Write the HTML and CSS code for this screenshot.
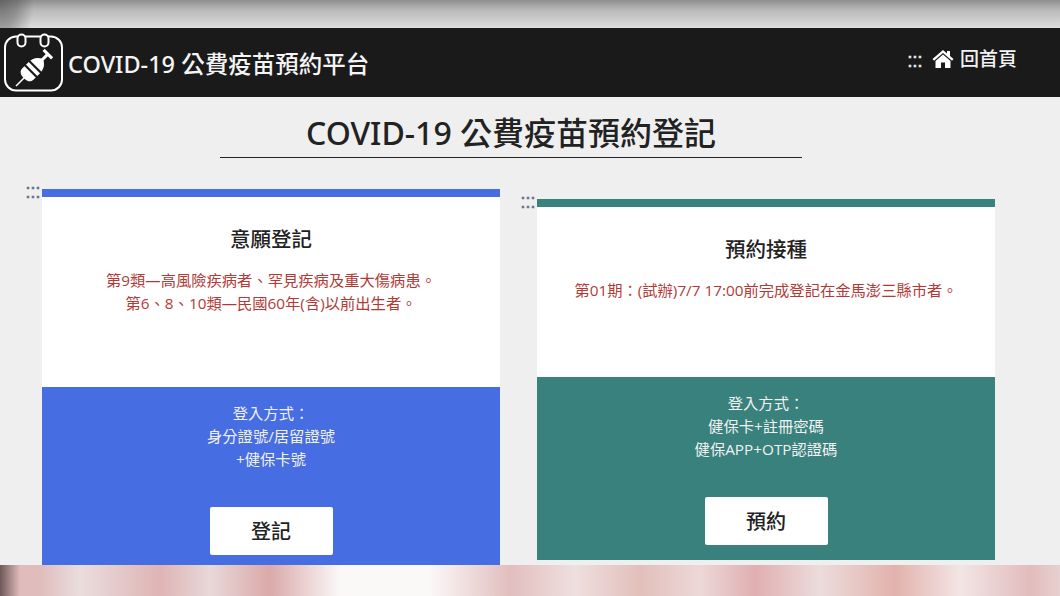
FILE: index.html
```html
<!DOCTYPE html>
<html lang="zh-Hant">
<head>
<meta charset="utf-8">
<title>COVID-19 公費疫苗預約平台</title>
<link rel="stylesheet" href="styles.css">
</head>
<body>
<div class="strip-top"></div>
<header class="topbar">
  <div class="brand">
    <svg class="logo" width="62" height="66" viewBox="0 0 62 66" fill="none">
      <rect x="3" y="8.500" width="57" height="54" rx="11" stroke="#fff" stroke-width="2"/>
      <rect x="15.500" y="6.500" width="8" height="12" rx="4" stroke="#fff" stroke-width="2" fill="#1a1a1a"/>
      <rect x="38.500" y="6.500" width="8" height="12" rx="4" stroke="#fff" stroke-width="2" fill="#1a1a1a"/>
      <g transform="rotate(45 31 41)">
        <path d="M31 52v13" stroke="#fff" stroke-width="1.600"/>
        <path d="M23 39c0-6 3-10 8-12 5 2 8 6 8 12v9c0 4-3 6-8 6s-8-2-8-6z" fill="#fff"/>
        <path d="M22 38h18M22 44h18" stroke="#1a1a1a" stroke-width="2.200"/>
        <path d="M31 29v-8M25 20h12" stroke="#fff" stroke-width="3"/>
      </g>
    </svg>
    <span class="brand-name">COVID-19 公費疫苗預約平台</span>
  </div>
  <nav class="nav">
    <span class="dots nav-dots">:::</span>
    <svg class="home" width="22" height="18" viewBox="0 0 22 18">
      <path d="M11 0 L0.500 9 L2 10.700 L11 3 L20 10.700 L21.500 9 L18 6 V1 H15 V3.400Z" fill="#fff"/>
      <path d="M11 4.500 L3.500 11 V18 H9 V12.500 H13 V18 H18.500 V11Z" fill="#fff"/>
    </svg>
    <a class="nav-link">回首頁</a>
  </nav>
</header>
<main class="main">
  <h1 class="page-title">COVID-19 公費疫苗預約登記</h1>
  <div class="cards">
    <section class="card card-blue">
      <span class="dots card-dots">:::</span>
      <div class="card-body">
        <h2 class="card-title">意願登記</h2>
        <p class="card-note">第9類—高風險疾病者、罕見疾病及重大傷病患。<br>第6、8、10類—民國60年(含)以前出生者。</p>
      </div>
      <div class="card-foot">
        <p class="login">登入方式：<br>身分證號/居留證號<br>+健保卡號</p>
        <a class="btn">登記</a>
      </div>
    </section>
    <section class="card card-green">
      <span class="dots card-dots">:::</span>
      <div class="card-body">
        <h2 class="card-title">預約接種</h2>
        <p class="card-note">第01期：(試辦)7/7 17:00前完成登記在金馬澎三縣市者。</p>
      </div>
      <div class="card-foot">
        <p class="login">登入方式：<br>健保卡+註冊密碼<br>健保APP+OTP認證碼</p>
        <a class="btn">預約</a>
      </div>
    </section>
  </div>
</main>
<div class="strip-bottom"></div>
</body>
</html>
```
FILE: styles.css
```css
* { box-sizing: border-box; }
html, body { margin: 0; padding: 0; }
body {
  width: 1060px;
  height: 596px;
  overflow: hidden;
  background: #efefef;
  font-family: "Open Sans", "Noto Sans CJK TC", sans-serif;
}
.strip-top {
  height: 28px;
  background:
    radial-gradient(ellipse 34px 60px at 0 0, rgba(70,70,70,.6) 0, rgba(70,70,70,.4) 50%, rgba(70,70,70,0) 100%),
    linear-gradient(180deg, #8e8e8e 0, #b9b9b9 10px, #dedede 28px);
}
.topbar {
  height: 69px;
  background: #1a1a1a;
  color: #fff;
  display: flex;
  justify-content: space-between;
  padding-left: 2px;
}
.brand { display: flex; align-items: flex-start; }
.logo { flex: none; }
.brand-name {
  font-family: "Noto Sans", "Noto Sans CJK TC", sans-serif;
  font-size: 23.500px;
  font-weight: 500;
  line-height: 30px;
  margin: 21px 0 0 4px;
  color: #f4f4f4;
  white-space: nowrap;
}
.nav {
  display: flex;
  align-items: center;
  height: 62px;
  padding-right: 43px;
}
.dots {
  font-family: "Liberation Sans", sans-serif;
  font-size: 21px;
  letter-spacing: -0.800px;
  line-height: 1;
  -webkit-text-stroke: 0.300px currentColor;
}
.nav-dots { color: #eee; margin-right: 10px; }
.home { margin-right: 6px; }
.nav-link { font-size: 19px; font-weight: 500; color: #f2f2f2; line-height: 24px; }
.main {
  height: 468px;
  overflow: hidden;
}
.page-title {
  width: 582px;
  height: 61px;
  margin: 0 0 0 220px;
  border-bottom: 1px solid #222;
  text-align: center;
  font-family: "Noto Sans", "Noto Sans CJK TC", sans-serif;
  font-size: 32px;
  font-weight: 500;
  line-height: 40px;
  padding-top: 16px;
  color: #222;
  white-space: nowrap;
}
.cards {
  display: flex;
  align-items: flex-start;
  gap: 37px;
  margin: 31px 0 0 42px;
}
.card {
  position: relative;
  width: 458px;
  text-align: center;
  flex: none;
}
.card-blue { --accent: #466de1; --foot: 200px; --body: 190px; }
.card-green { --accent: #38817c; --foot: 183px; --body: 170px; margin-top: 10px; }
.card-dots {
  position: absolute;
  left: -17px;
  top: -9px;
  color: #5d7290;
}
.card-body {
  height: calc(var(--body) + 8px);
  border-top: 8px solid var(--accent);
  background: #fff;
  padding-top: 28px;
}
.card-title {
  margin: 0;
  font-size: 20.500px;
  font-weight: 500;
  line-height: 28px;
  color: #222;
}
.card-note {
  margin: 16px 0 0;
  font-size: 15.300px;
  line-height: 23px;
  color: #b23a36;
}
.card-foot {
  height: var(--foot);
  background: var(--accent);
  padding-top: 15px;
}
.login {
  margin: 0;
  font-size: 15.300px;
  line-height: 23px;
  color: #f1f1f1;
}
.btn {
  display: block;
  width: 123px;
  height: 48px;
  margin: 36px auto 0;
  background: #fff;
  border-radius: 2px;
  font-size: 20px;
  font-weight: 500;
  line-height: 49px;
  color: #222;
}
.strip-bottom {
  height: 31px;
  background:
    linear-gradient(90deg, rgba(90,70,70,.85) 0, rgba(90,70,70,0) 20px),
    linear-gradient(90deg, #e0bcbc 40px, #eadddd 80px, #dfb4b4 160px, #e8d8d8 210px, #dba9a9 270px, #fbf8f8 340px, #fbf8f8 430px, #e2bebe 510px, #efdfdf 575px, #e2bfbb 640px, #edd8d8 700px, #e0afb0 755px, #ecdcdc 820px, #e2b2ac 895px, #f3e5e5 960px, #e2bcbc 1030px, #e8d0d0 1060px);
}
```
